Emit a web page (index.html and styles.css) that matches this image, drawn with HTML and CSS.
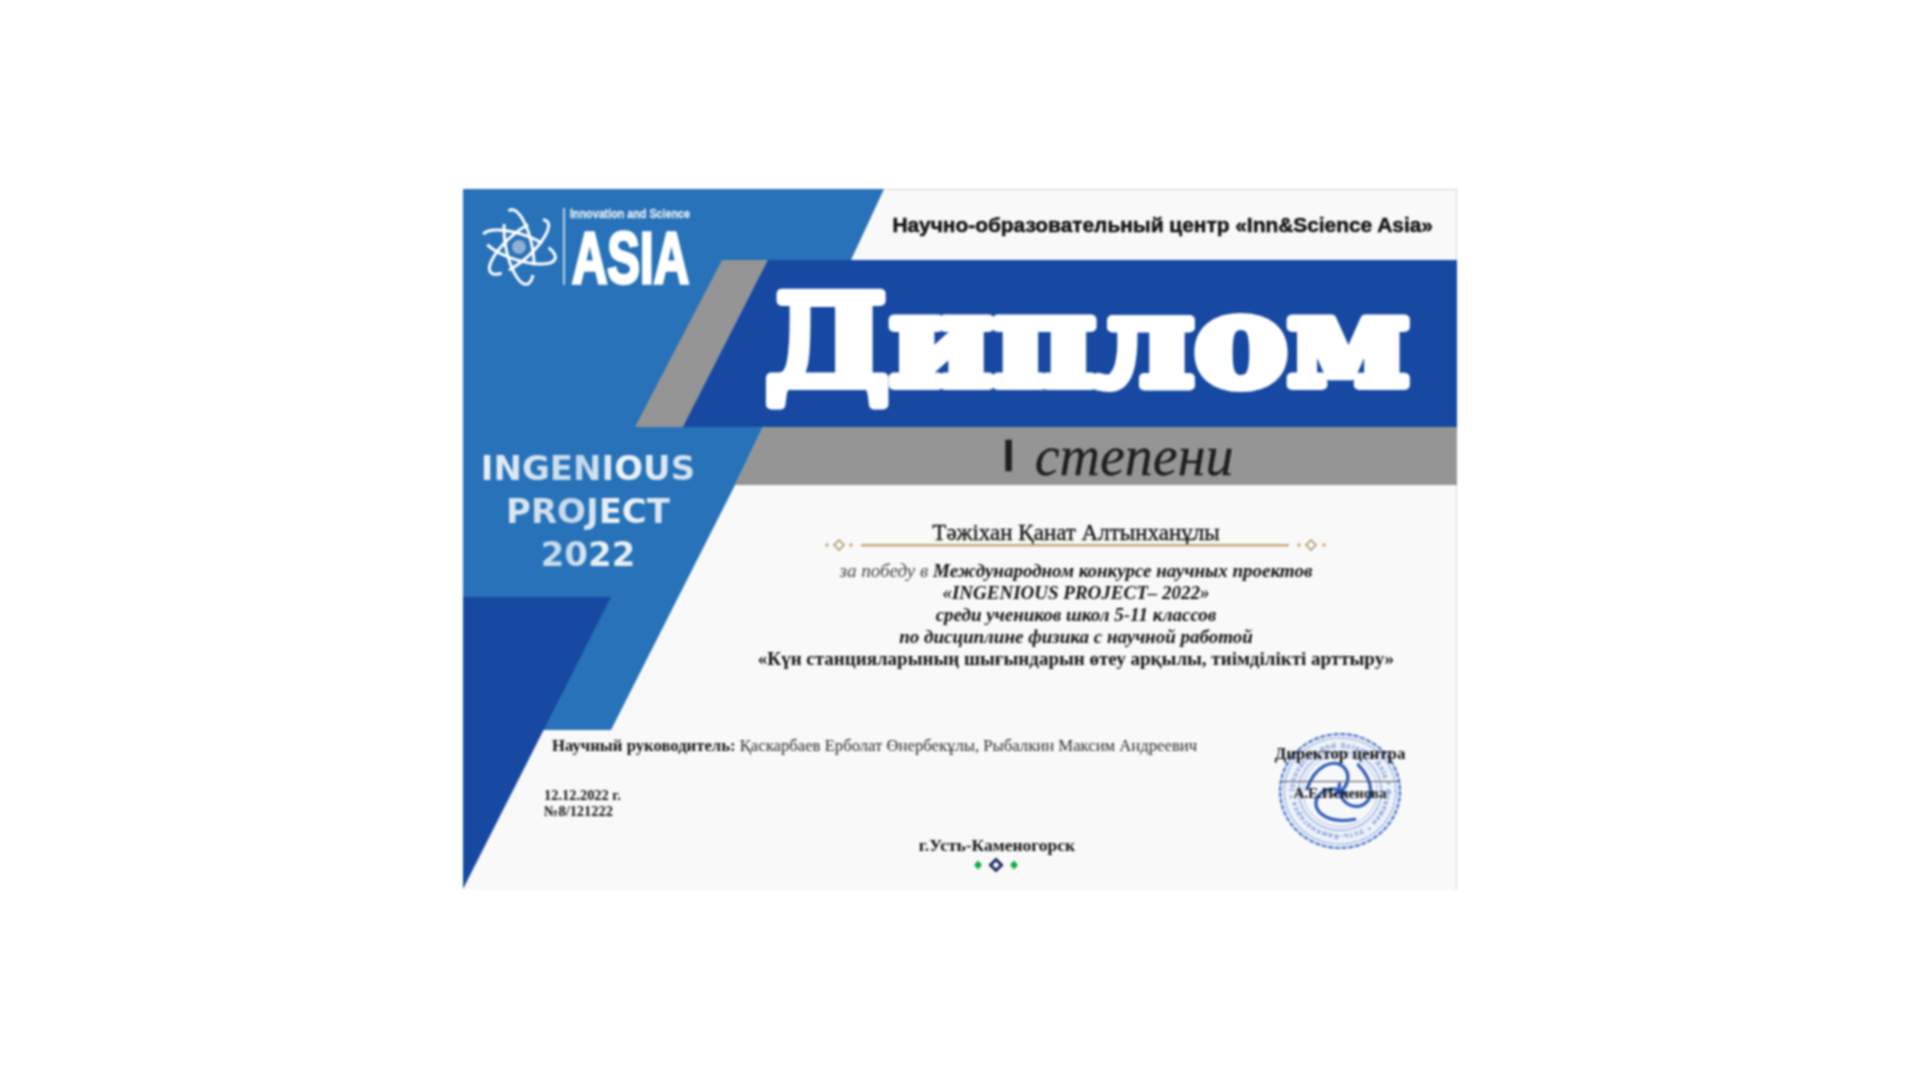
FILE: index.html
```html
<!DOCTYPE html>
<html lang="ru">
<head>
<meta charset="utf-8">
<title>Диплом</title>
<link rel="stylesheet" href="styles.css">
</head>
<body>
<div class="cert">
  <svg class="shapes" viewBox="0 0 994 701" aria-hidden="true">
    <polygon class="c-light" points="0,0 421,0 388,71 300,238 272,296 148,541 80,541 0,408"/>
    <polygon class="c-dark" points="0,408 148,408 0,700"/>
    <polygon class="c-grey" points="259,71 305,71 220,238 172,238"/>
    <polygon class="c-dark" points="305,71 994,71 994,238 220,238"/>
    <polygon class="c-grey" points="300,238 994,238 994,296 272,296"/>
  </svg>

  <section class="top">
    <aside class="side">
      <svg class="logo" viewBox="0 0 230 80">
        <g class="orbits" transform="translate(56 39)">
          <ellipse rx="38" ry="13" transform="rotate(18)" stroke-dasharray="74 12 62 8"/>
          <ellipse rx="38" ry="13" transform="rotate(78)" stroke-dasharray="68 14 66 10"/>
          <ellipse rx="38" ry="13" transform="rotate(138)" stroke-dasharray="64 16 70 8"/>
          <circle class="globe" r="7"/>
        </g>
        <rect class="divider" x="100" y="0" width="2" height="77"/>
        <text class="logo-small" x="107" y="10" textLength="120" lengthAdjust="spacingAndGlyphs">Innovation and Science</text>
        <text class="logo-big" x="109" y="75" textLength="117" lengthAdjust="spacingAndGlyphs">ASIA</text>
      </svg>
      <div class="event">
        <div>INGENIOUS</div>
        <div>PROJECT</div>
        <div>2022</div>
      </div>
    </aside>
    <main class="main">
      <header class="org">Научно-образовательный центр «Inn&amp;Science Asia»</header>
      <svg class="band" viewBox="0 0 754 167">
        <text class="title" x="62" y="125" textLength="644" lengthAdjust="spacingAndGlyphs">Диплом</text>
      </svg>
      <div class="degree"><span class="degree-num">I</span> степени</div>
      <div class="body">
        <div class="name">Тәжіхан Қанат Алтынханұлы</div>
        <svg class="rule" viewBox="0 0 504 12" aria-hidden="true">
          <circle class="gold" cx="3" cy="6" r="1.8"/>
          <polygon class="gold-line" points="15,1 20,6 15,11 10,6"/>
          <circle class="gold" cx="27" cy="6" r="1.8"/>
          <rect class="gold" x="37" y="5" width="428" height="2.4"/>
          <circle class="gold" cx="475" cy="6" r="1.8"/>
          <polygon class="gold-line" points="487,1 492,6 487,11 482,6"/>
          <circle class="gold" cx="500" cy="6" r="1.8"/>
        </svg>
        <div class="award">
          <div><span class="award-lead">за победу в </span><b>Международном конкурсе научных проектов</b></div>
          <div><b>«INGENIOUS PROJECT– 2022»</b></div>
          <div><b>среди учеников школ 5-11 классов</b></div>
          <div><b>по дисциплине физика с научной работой</b></div>
          <div class="award-topic">«Күн станцияларының шығындарын өтеу арқылы, тиімділікті арттыру»</div>
        </div>
      </div>
    </main>
  </section>

  <section class="bottom">
    <div class="info">
      <div class="supervisor"><b>Научный руководитель:</b> Қаскарбаев Ерболат Өнербекұлы, Рыбалкин Максим Андреевич</div>
      <div class="doc">12.12.2022 г.<br>№8/121222</div>
      <div class="city">г.Усть-Каменогорск</div>
      <svg class="city-mark" viewBox="0 0 44 16" aria-hidden="true">
        <polygon class="green" points="4,3.5 8,8 4,12.5 0,8"/>
        <polygon class="navy" points="22,2.5 27.5,8 22,13.5 16.5,8"/>
        <polygon class="green" points="40,3.5 44,8 40,12.5 36,8"/>
      </svg>
    </div>
    <div class="sign">
      <svg class="stamp" viewBox="0 0 120 120" preserveAspectRatio="none" aria-hidden="true">
        <defs><path id="ring" d="M60 60 m-44 0 a44 44 0 1 1 88 0 a44 44 0 1 1 -88 0"/></defs>
        <circle class="s0" cx="60" cy="60" r="58"/>
        <circle class="s1" cx="60" cy="60" r="58"/>
        <circle class="s2" cx="60" cy="60" r="54"/>
        <circle class="s3" cx="60" cy="60" r="40"/>
        <circle class="s4" cx="60" cy="60" r="36"/>
        <text class="stamp-text"><textPath href="#ring" textLength="272">Innovation and Science Asia * Өскемен * Усть-Каменогорск *</textPath></text>
        <g class="swirl" transform="translate(60 60)">
          <path d="M-32 -2C-24 -26 -6 -34 4 -24C12 -14 6 0 -6 4"/>
          <path d="M-32 -2C-24 -26 -6 -34 4 -24C12 -14 6 0 -6 4" transform="rotate(120)"/>
          <path d="M-32 -2C-24 -26 -6 -34 4 -24C12 -14 6 0 -6 4" transform="rotate(240)"/>
        </g>
      </svg>
      <div class="sign-text">
        <div class="sign-title">Директор центра</div>
        <div class="sign-name">А.Е.Искенова</div>
      </div>
    </div>
  </section>
</div>
</body>
</html>
```
FILE: styles.css
```css
html, body { margin: 0; padding: 0; background: #fff; }
body {
  height: 1078px;
  padding-bottom: 2px;
  display: flex;
  align-items: center;
  justify-content: center;
  overflow: hidden;
}
.cert {
  position: relative;
  width: 994px;
  height: 701px;
  background: #f9f9f9;
  display: flex;
  flex-direction: column;
  font-family: "Liberation Serif", serif;
  color: #111;
  filter: blur(0.8px);
  box-shadow: inset -1px 1px 0 #d4d4d4;
}
.shapes { position: absolute; inset: 0; width: 994px; height: 701px; }
.c-light { fill: #2772b8; }
.c-dark { fill: #1749a3; }
.c-grey { fill: #959595; }

.top { position: relative; display: flex; height: 486px; }
.side { width: 240px; flex: none; display: flex; flex-direction: column; }
.logo { width: 230px; height: 80px; margin: 19px 0 0 0; flex: none; overflow: visible; }
.orbits ellipse { fill: none; stroke: #fff; stroke-width: 3; }
.globe { fill: #8fb0d2; }
.divider { fill: #b9d2ea; }
.logo-small { font: 700 12.5px "Liberation Sans", sans-serif; fill: #dfeaf5; stroke: #dfeaf5; stroke-width: 0.35; }
.logo-big { font: 700 72px "Liberation Sans", sans-serif; fill: #fff; stroke: #fff; stroke-width: 3.4; }
.event {
  margin-top: 159px;
  width: 250px;
  text-align: center;
  font: 700 34px/43px "DejaVu Sans", sans-serif;
  background: linear-gradient(100deg, #f2f6fa, #c3d8ea 45%, #f0f5f9 60%, #bcd3e7);
  -webkit-background-clip: text;
  background-clip: text;
  color: transparent;
}

.main { flex: 1; display: flex; flex-direction: column; min-width: 0; }
.org {
  height: 71px;
  flex: none;
  display: flex;
  align-items: center;
  justify-content: flex-end;
  padding: 1px 24px 0 0;
  box-sizing: border-box;
  font: 700 20.9px "Liberation Sans", sans-serif;
  color: #111;
  white-space: nowrap;
  -webkit-text-stroke: 0.5px #111;
}
.band { display: block; width: 754px; height: 167px; flex: none; }
.title {
  font: 700 125px "DejaVu Serif", serif;
  fill: #fff;
  stroke: #fff;
  stroke-width: 10;
  stroke-linejoin: round;
}
.degree {
  height: 58px;
  flex: none;
  display: flex;
  align-items: center;
  justify-content: center;
  gap: 20px;
  padding-left: 76px;
  box-sizing: border-box;
  font: italic 400 56px/58px "Liberation Serif", serif;
  color: #1f1f1f;
  -webkit-text-stroke: 0.3px #1f1f1f;
}
.degree-num { font: 700 44px/58px "Liberation Sans", sans-serif; }
.body {
  display: flex;
  flex-direction: column;
  align-items: center;
  padding: 37px 8px 0 0;
}
.name { font-size: 23px; line-height: 22px; white-space: nowrap; -webkit-text-stroke: 0.35px #111; }
.rule { width: 504px; height: 12px; margin-top: -5px; flex: none; }
.gold { fill: #c9a57a; }
.gold-line { fill: none; stroke: #b08e62; stroke-width: 1.5; }
.award {
  margin-top: 9px;
  text-align: center;
  font-size: 19px;
  line-height: 22px;
  white-space: nowrap;
}
.award div { font-style: italic; }
.award-lead { color: #444; }
.award-topic { font-weight: 700; font-style: normal !important; }

.bottom { position: relative; flex: 1; display: flex; padding-left: 81px; }
.info { width: 726px; flex: none; display: flex; flex-direction: column; }
.supervisor {
  margin: 61px 0 0 8px;
  font-size: 16.7px;
  line-height: 20px;
  white-space: nowrap;
  color: #2a2a2a;
}
.supervisor b { color: #111; }
.doc { margin-top: 31px; font-size: 14.4px; line-height: 16px; font-weight: 700; }
.city {
  margin-top: 16px;
  padding-left: 180px;
  text-align: center;
  font-size: 17.5px;
  line-height: 20px;
  font-weight: 700;
}
.city-mark { width: 44px; height: 16px; margin: 2px 0 0 430px; flex: none; }
.green { fill: #12ad3f; }
.navy { fill: none; stroke: #1a2a5c; stroke-width: 3; }

.sign { position: relative; width: 124px; height: 118px; margin: 57px 0 0 8px; }
.stamp { display: block; width: 124px; height: 118px; }
.s0 { fill: #eef2f9; }
.s1 { fill: none; stroke: #4a76c4; stroke-width: 2.2; stroke-dasharray: 5 1.5; }
.s2 { fill: none; stroke: #7f9fd8; stroke-width: 1.2; stroke-dasharray: 3 1; }
.s3 { fill: none; stroke: #6f93d2; stroke-width: 1.4; stroke-dasharray: 2 1; }
.s4 { fill: #f7f8fb; stroke: #9db6e0; stroke-width: 0.8; }
.stamp-text { font: 700 7.5px "Liberation Sans", sans-serif; fill: #6e90cf; }
.swirl path { fill: none; stroke: #2f5cb5; stroke-width: 3.2; stroke-linecap: round; }
.sign-text {
  position: absolute;
  left: 3px;
  right: 3px;
  top: 11px;
  font-weight: 700;
  color: #111;
  white-space: nowrap;
}
.sign-title {
  display: flex;
  justify-content: center;
  font-size: 16.8px;
  line-height: 22px;
  padding-bottom: 16px;
  border-bottom: 1.5px solid #555;
}
.sign-name { display: flex; justify-content: center; font-size: 15px; line-height: 22px; }
```
